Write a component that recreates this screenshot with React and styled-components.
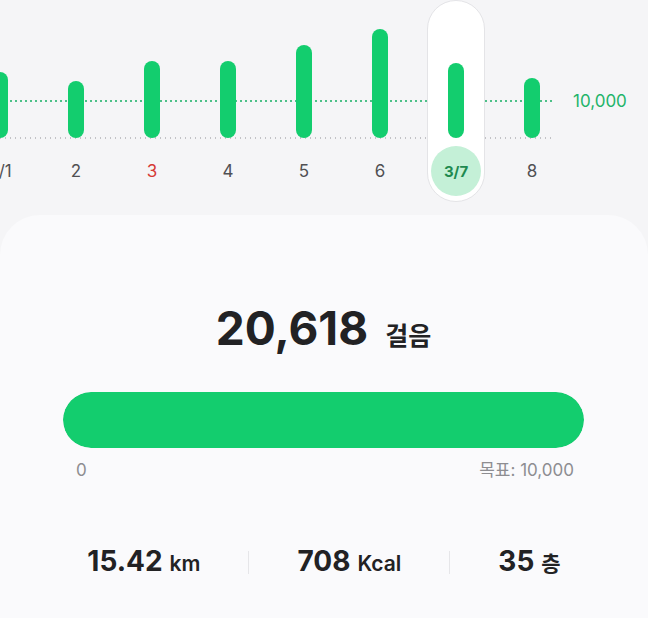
import React from "react";
import styled, { createGlobalStyle } from "styled-components";

const days = [
  { label: "3/1", steps: 66 },
  { label: "2", steps: 57 },
  { label: "3", steps: 77, holiday: true },
  { label: "4", steps: 77 },
  { label: "5", steps: 93 },
  { label: "6", steps: 109 },
  { label: "3/7", steps: 75, selected: true },
  { label: "8", steps: 60 },
];

const stats = [
  { value: "15.42", unit: "km" },
  { value: "708", unit: "Kcal" },
  { value: "35", unit: "층" },
];

const GREEN = "#13cd6e";

const GlobalStyle = createGlobalStyle`
  html, body {
    margin: 0;
    padding: 0;
    background: #f5f5f7;
  }
  body {
    font-family: Inter, "Noto Sans CJK KR", "Noto Sans", sans-serif;
    color: #1f1f21;
  }
  #root {
    height: 618px;
    overflow: hidden;
  }
`;

const App = () => {
  return (
    <Page>
      <GlobalStyle />
      <ChartRow>
        <Columns>
          {days.map((day) => (
            <Column key={day.label}>
              <Pill $selected={day.selected}>
                <BarSlot>
                  <Bar style={{ height: day.steps }} />
                </BarSlot>
                <DayMark $selected={day.selected} $holiday={day.holiday}>
                  {day.label}
                </DayMark>
              </Pill>
            </Column>
          ))}
        </Columns>
        <GoalValue>10,000</GoalValue>
      </ChartRow>

      <Card>
        <Total>
          20,618
          <TotalUnit>걸음</TotalUnit>
        </Total>
        <Progress>
          <ProgressFill style={{ width: "100%" }} />
        </Progress>
        <ProgressLabels>
          <span>0</span>
          <span>목표: 10,000</span>
        </ProgressLabels>
        <StatRow>
          {stats.map((s, i) => (
            <React.Fragment key={s.unit}>
              {i > 0 && <Divider />}
              <Stat>
                {s.value}
                <StatUnit>{s.unit}</StatUnit>
              </Stat>
            </React.Fragment>
          ))}
        </StatRow>
      </Card>
    </Page>
  );
};

const Page = styled.div`
  width: 648px;
  height: 618px;
  overflow: hidden;
`;

const ChartRow = styled.div`
  display: flex;
  align-items: flex-start;
`;

const Columns = styled.div`
  position: relative;
  display: flex;
  margin-left: -38px;
  flex-shrink: 0;

  /* goal line and base line behind the bars */
  &::before,
  &::after {
    content: "";
    position: absolute;
    left: 38px;
    width: 553px;
    background-repeat: repeat-x;
  }
  &::before {
    top: 100px;
    height: 2px;
    background-image: linear-gradient(to right, #2fb774 0 1.6px, transparent 1.6px);
    background-size: 5px 2px;
    opacity: 0.85;
  }
  &::after {
    top: 137px;
    height: 1.5px;
    background-image: linear-gradient(to right, #c2c2c6 0 1.5px, transparent 1.5px);
    background-size: 5px 1.5px;
  }
`;

const Column = styled.div`
  width: 76px;
  display: flex;
  justify-content: center;
`;

const Pill = styled.div`
  position: relative;
  z-index: 1;
  box-sizing: border-box;
  width: 58px;
  height: 202px;
  border-radius: 29px;
  display: flex;
  flex-direction: column;
  align-items: center;
  padding-bottom: 5px;
  background: ${(p) => (p.$selected ? "#ffffff" : "transparent")};
  border: 1px solid ${(p) => (p.$selected ? "#e4e4e7" : "transparent")};
`;

const BarSlot = styled.div`
  flex: 1;
  display: flex;
  align-items: flex-end;
  padding-bottom: 8px;
`;

const Bar = styled.div`
  width: 16px;
  border-radius: 8px;
  background: ${GREEN};
`;

const DayMark = styled.div`
  width: 50px;
  height: 50px;
  border-radius: 50%;
  display: flex;
  align-items: center;
  justify-content: center;
  font-size: ${(p) => (p.$selected ? "15px" : "17px")};
  font-weight: ${(p) => (p.$selected ? 700 : 400)};
  background: ${(p) => (p.$selected ? "#c4f0d7" : "transparent")};
  color: ${(p) =>
    p.$selected ? "#1f8a50" : p.$holiday ? "#d63b35" : "#505053"};
`;

const GoalValue = styled.div`
  margin-left: 3px;
  margin-top: 90px;
  line-height: 22px;
  font-size: 17px;
  color: #1fb46a;
`;

const Card = styled.div`
  margin-top: 13px;
  height: 420px;
  box-sizing: border-box;
  background: #fafafc;
  border-radius: 40px 40px 0 0;
  padding: 85px 64px 0 63px;
`;

const Total = styled.div`
  display: flex;
  justify-content: center;
  align-items: baseline;
  font-size: 46px;
  font-weight: 700;
  line-height: 56px;
  color: #222224;
`;

const TotalUnit = styled.span`
  margin-left: 17px;
  font-size: 25px;
  font-weight: 700;
`;

const Progress = styled.div`
  margin-top: 28px;
  height: 56px;
  border-radius: 28px;
  background: #e8e8ec;
  overflow: hidden;
`;

const ProgressFill = styled.div`
  height: 100%;
  border-radius: 28px;
  background: ${GREEN};
`;

const ProgressLabels = styled.div`
  display: flex;
  justify-content: space-between;
  margin-top: 12px;
  padding: 0 10px 0 13px;
  font-size: 17px;
  line-height: 20px;
  color: #8d8d91;
`;

const StatRow = styled.div`
  display: flex;
  justify-content: center;
  align-items: center;
  gap: 48px;
  margin: 65px -64px 0 -63px;
`;

const Stat = styled.div`
  display: flex;
  align-items: baseline;
  font-size: 28px;
  font-weight: 700;
  line-height: 32px;
  color: #222224;
`;

const StatUnit = styled.span`
  margin-left: 7px;
  font-size: 21px;
  font-weight: 600;
`;

const Divider = styled.div`
  width: 1px;
  height: 23px;
  background: #e6e6e9;
`;

export default App;
